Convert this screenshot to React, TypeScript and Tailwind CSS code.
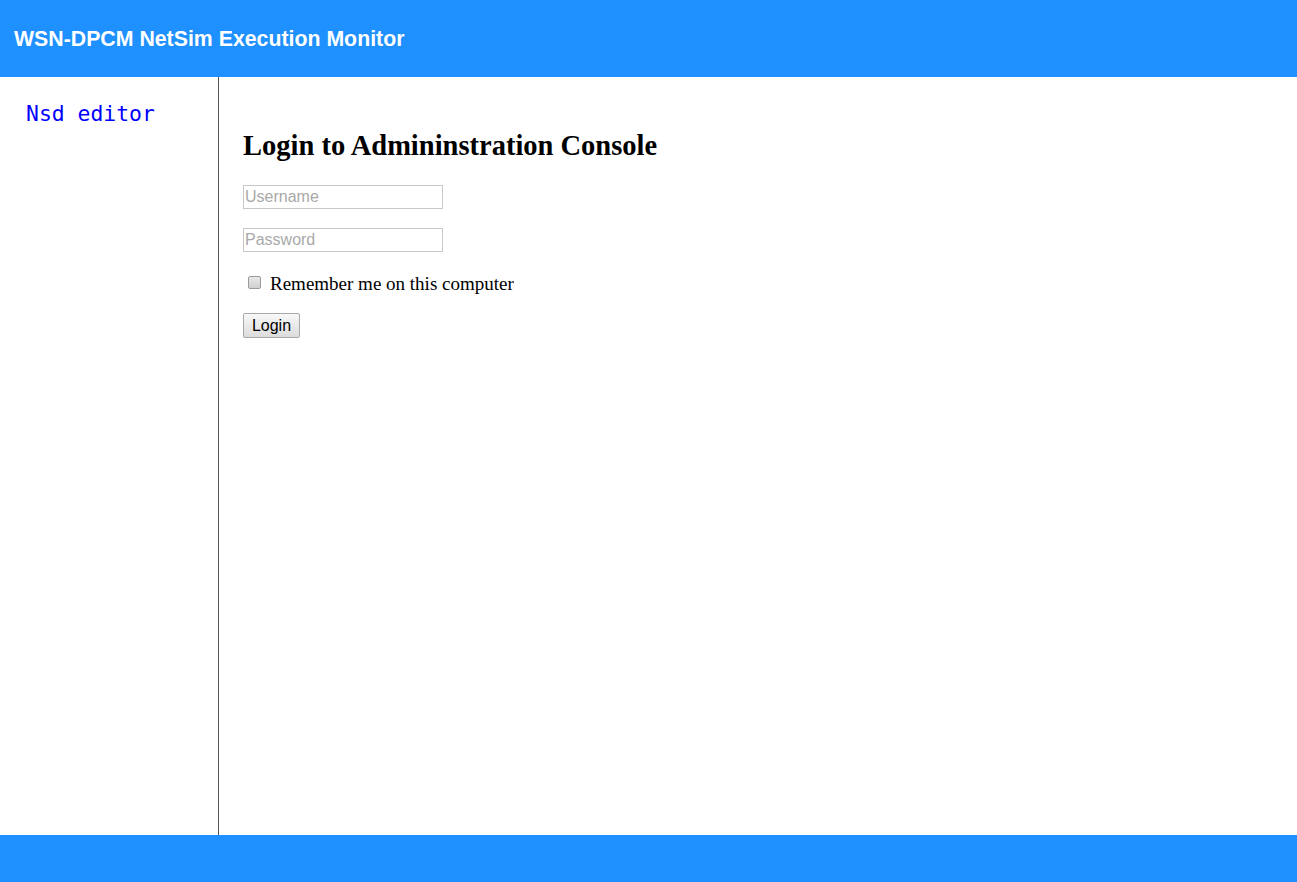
import React from "react";

export default function App() {
  return (
    <div className="flex h-[882px] w-full flex-col bg-white">
      <header className="flex h-[77px] shrink-0 items-center bg-[#1e90ff] px-[14px] pt-[2px]">
        <h1 className="text-[21.3px] font-bold text-white" style={{ fontFamily: '"Liberation Sans", Arial, sans-serif' }}>
          WSN-DPCM NetSim Execution Monitor
        </h1>
      </header>
      <div className="flex flex-1">
        <aside className="w-[219px] shrink-0 border-r border-[#555] pl-[26px] pt-[23px]">
          <a
            href="#"
            className="text-[21.4px] leading-[28px] text-[#0000ff]"
            style={{ fontFamily: '"DejaVu Sans Mono", "Liberation Mono", monospace' }}
          >
            Nsd editor
          </a>
        </aside>
        <main className="flex-1 pl-[24px] pt-[52px]" style={{ fontFamily: '"Liberation Serif", "Times New Roman", serif' }}>
          <h2 className="text-[28.5px] font-bold leading-[34px] text-black">Login to Admininstration Console</h2>
          <div className="mt-[22px] flex flex-col">
            <input
              placeholder="Username"
              className="h-[24px] w-[200px] border border-[#c8c8c8] px-[1px] text-[16px] placeholder:text-[#a9a9a9]"
              style={{ fontFamily: '"Liberation Sans", Arial, sans-serif' }}
            />
            <input
              type="password"
              placeholder="Password"
              className="mt-[19px] h-[24px] w-[200px] border border-[#c8c8c8] px-[1px] text-[16px] placeholder:text-[#a9a9a9]"
              style={{ fontFamily: '"Liberation Sans", Arial, sans-serif' }}
            />
            <label className="mt-[20px] flex items-center text-[19px] leading-[24px] text-black">
              <input
                type="checkbox"
                className="ml-[5px] mr-[9px] h-[13px] w-[13px] -translate-y-[2px] appearance-none rounded-[2px] border border-[#9a9a9a] bg-gradient-to-b from-[#e8e8e8] to-[#d0d0d0]"
              />
              Remember me on this computer
            </label>
            <div className="mt-[17px]">
              <button
                className="h-[25px] w-[57px] rounded-[2px] border border-[#a8a8a8] bg-gradient-to-b from-[#f8f8f8] to-[#dcdcdc] text-[16px] text-black"
                style={{ fontFamily: '"Liberation Sans", Arial, sans-serif' }}
              >
                Login
              </button>
            </div>
          </div>
        </main>
      </div>
      <footer className="h-[47px] shrink-0 bg-[#1e90ff]" />
    </div>
  );
}
